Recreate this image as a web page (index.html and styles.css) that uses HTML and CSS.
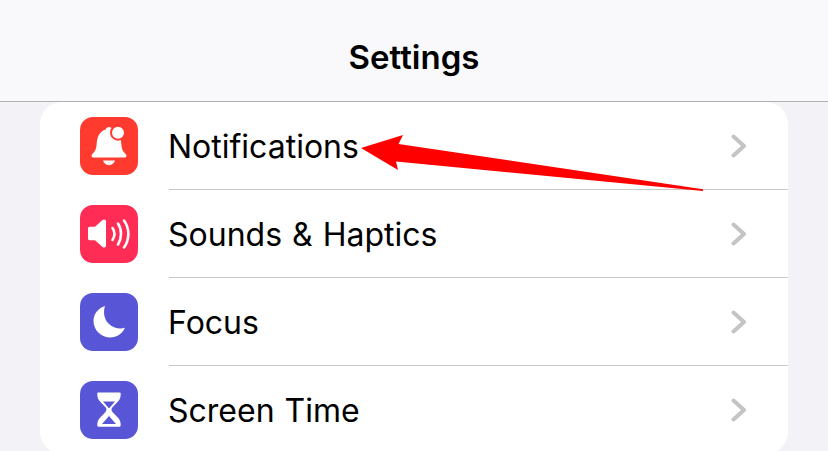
FILE: index.html
```html
<!DOCTYPE html>
<html lang="en">
<head>
<meta charset="utf-8">
<title>Settings</title>
<link rel="stylesheet" href="styles.css">
</head>
<body>
<div class="screen">
  <header class="navbar"><h1 class="navbar-title">Settings</h1></header>
  <main class="content">
    <ul class="card">
      <li class="row">
        <span class="icon icon-red">
          <svg viewBox="0 0 58 58" width="58" height="58">
            <path class="glyph" d="M29 10c1.700 0 3 1 3.300 2.400 6 1.800 8.600 6.800 9.100 15.100 .3 5.500 2.500 7.500 4.600 10 1 1.200 .4 3-1.400 3H13.400c-1.800 0-2.400-1.800-1.400-3 2.100-2.500 4.300-4.500 4.600-10 .5-8.300 3.100-13.300 9.100-15.100C26 11 27.300 10 29 10z"/>
            <circle class="dot" cx="38" cy="15.700" r="7"/>
            <path class="glyph" d="M23 43.500h12c-.6 2.700-3 4.700-6 4.700s-5.400-2-6-4.700z"/>
          </svg>
        </span>
        <span class="label">Notifications</span>
        <svg class="chevron" viewBox="0 0 16 24" width="16" height="24"><path d="M2.500 2.500 13 12 2.500 21.500"/></svg>
      </li>
      <li class="row">
        <span class="icon icon-pink">
          <svg viewBox="0 0 58 58" width="58" height="58">
            <path class="glyph" d="M8 23.500c0-1 .7-1.700 1.700-1.700h5.300L22.500 15c1.300-1.200 3.500-.4 3.500 1.500v24c0 1.900-2.200 2.700-3.500 1.500L15 35.200H9.700c-1 0-1.700-.7-1.700-1.700z"/>
            <path class="wave" d="M32.500 23c2.500 3.500 2.500 8 0 12"/>
            <path class="wave" d="M38 18.500c4 6 4 14.500 0 21"/>
            <path class="wave" d="M44 15.500c5.800 8 5.800 19 0 27"/>
          </svg>
        </span>
        <span class="label">Sounds &amp; Haptics</span>
        <svg class="chevron" viewBox="0 0 16 24" width="16" height="24"><path d="M2.500 2.500 13 12 2.500 21.500"/></svg>
      </li>
      <li class="row">
        <span class="icon icon-indigo">
          <svg viewBox="0 0 58 58" width="58" height="58">
            <path class="glyph" d="M25 13c-2 6-1 13 3.500 17.500C33 35 39.500 36.500 45 34.800c-3 6.200-8.500 9.700-14.500 9.700-9 0-17-7-17-16.500C13.500 21 18 15.300 25 13z"/>
          </svg>
        </span>
        <span class="label">Focus</span>
        <svg class="chevron" viewBox="0 0 16 24" width="16" height="24"><path d="M2.500 2.500 13 12 2.500 21.500"/></svg>
      </li>
      <li class="row">
        <span class="icon icon-indigo">
          <svg viewBox="0 0 58 58" width="58" height="58">
            <path class="glyph" d="M18.500 11.500h21c.8 0 1.200.5 1.200 1.200 0 3.300-.5 5.300-2.700 7.800l-5.500 5.800c-1.300 1.300-1.300 3.300 0 4.600l5.500 5.800c2.200 2.500 2.700 4.500 2.700 7.800 0 .7-.4 1.200-1.200 1.200h-21c-.8 0-1.200-.5-1.200-1.200 0-3.300.5-5.300 2.700-7.800l5.500-5.800c1.300-1.300 1.300-3.300 0-4.600L20 20.500c-2.200-2.500-2.700-4.500-2.700-7.800 0-.7.400-1.200 1.200-1.200z"/>
            <path class="inner" d="M23 20.500h12l-4.500 5.200c-.8.900-1 1.300-1.500 1.300s-.7-.4-1.500-1.300zM29 34.500c.4.900.8 1.500 1.500 2.200l5.500 6.300H22l5.500-6.300c.7-.7 1.100-1.300 1.500-2.200z"/>
          </svg>
        </span>
        <span class="label">Screen Time</span>
        <svg class="chevron" viewBox="0 0 16 24" width="16" height="24"><path d="M2.500 2.500 13 12 2.500 21.500"/></svg>
      </li>
    </ul>
  </main>
  <svg class="arrow" viewBox="0 0 828 451" width="828" height="451" aria-hidden="true">
    <path d="M361 148 403 135 398.500 144 703 189.300 703 191 396 161.500 398 170z"/>
  </svg>
</div>
</body>
</html>
```
FILE: styles.css
```css
* { box-sizing: border-box; }
html, body { margin: 0; padding: 0; }
body {
  width: 828px;
  height: 451px;
  overflow: hidden;
  background: #f2f2f7;
  font-family: Inter, "Liberation Sans", sans-serif;
  color: #000;
}
.screen { position: relative; width: 828px; height: 451px; overflow: hidden; }
.navbar {
  height: 102px;
  background: #f9f9fb;
  border-bottom: 1px solid #b1b1b3;
  display: flex;
  align-items: center;
  justify-content: center;
  padding-top: 13px;
}
.navbar-title { margin: 0; font-size: 33px; font-weight: 600; }
.content { padding: 0 40px; }
.card {
  list-style: none;
  margin: 0;
  padding: 0;
  background: #fff;
  border-radius: 22px;
  height: 352px;
}
.row {
  position: relative;
  height: 88px;
  display: flex;
  align-items: center;
  padding-left: 40px;
  padding-right: 39px;
}
.row + .row::before {
  content: "";
  position: absolute;
  top: -1px;
  left: 129px;
  right: 0;
  height: 1px;
  background: #c8c8ca;
}
.icon { width: 58px; height: 58px; border-radius: 13px; flex: none; display: block; }
.icon svg { display: block; }
.icon-red { background: #ff3b30; }
.icon-pink { background: #ff2d55; }
.icon-indigo { background: #5856d6; }
.glyph { fill: #fff; }
.inner { fill: #5856d6; }
.dot { fill: #fff; stroke: #ff3b30; stroke-width: 2; }
.wave { fill: none; stroke: #fff; stroke-width: 2.600; stroke-linecap: round; }
.label { margin-left: 30px; padding-top: 2px; flex: 1; font-size: 32px; word-spacing: 1px; line-height: 40px; }
.chevron { flex: none; margin-right: 2px; }
.chevron path { fill: none; stroke: #c4c4c6; stroke-width: 4; stroke-linecap: round; stroke-linejoin: round; }
.arrow { position: absolute; top: 0; left: 0; }
.arrow path { fill: #ff0000; }
```
